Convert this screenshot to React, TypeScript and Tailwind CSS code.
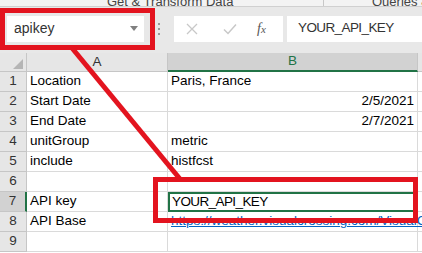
import React from "react";

const RED = "#e3141f";

type Row = { n: number; a?: string; b?: React.ReactNode; right?: boolean };

const rows: Row[] = [
  { n: 1, a: "Location", b: "Paris, France" },
  { n: 2, a: "Start Date", b: "2/5/2021", right: true },
  { n: 3, a: "End Date", b: "2/7/2021", right: true },
  { n: 4, a: "unitGroup", b: "metric" },
  { n: 5, a: "include", b: "histfcst" },
  { n: 6 },
  { n: 7, a: "API key", b: <span className="tracking-[-0.6px]">YOUR_API_KEY</span> },
  {
    n: 8,
    a: "API Base",
    b: (
      <span className="whitespace-nowrap text-[#0563c1] underline">
        https://weather.visualcrossing.com/VisualCrossingWebServices
      </span>
    ),
  },
  { n: 9 },
];

function FormulaBar() {
  return (
    <div className="flex h-[46px] items-center bg-[#e8e8e8] pb-[3px] pl-[7px]">
      <div className="flex h-[26px] w-[137px] items-center justify-between bg-white pl-[7px] pr-[6px] text-[14px] text-[#333]">
        <span>apikey</span>
        <svg width="8" height="5" viewBox="0 0 8 5">
          <path d="M0 0h8L4 5z" fill="#808080" />
        </svg>
      </div>
      <div className="ml-[14px] flex flex-col gap-[3px]">
        <span className="h-[2px] w-[2px] bg-[#9a9a9a]" />
        <span className="h-[2px] w-[2px] bg-[#9a9a9a]" />
        <span className="h-[2px] w-[2px] bg-[#9a9a9a]" />
      </div>
      <div className="ml-[14px] flex h-[26px] w-[109px] items-center bg-white">
        <svg width="12" height="12" viewBox="0 0 12 12" className="ml-[12px]">
          <path d="M1 1l10 10M11 1L1 11" stroke="#c8c8c8" strokeWidth="1.3" />
        </svg>
        <svg width="14" height="12" viewBox="0 0 14 12" className="ml-[25px]">
          <path d="M1 6.5l4 4L13 1.5" stroke="#c8c8c8" strokeWidth="1.5" fill="none" />
        </svg>
        <span className="ml-[20px] font-['Liberation_Serif',serif] text-[14px] italic text-[#555]">
          f<span className="text-[11px]">x</span>
        </span>
      </div>
      <div className="ml-[4px] flex h-[26px] flex-1 items-center bg-white pl-[11px] text-[13.5px] tracking-[-0.6px] text-[#333]">
        YOUR_API_KEY
      </div>
    </div>
  );
}

function Grid() {
  return (
    <div className="grid grid-cols-[27px_141px_250px_1fr] bg-white text-[13.5px] text-black">
      <div className="relative h-[19px] border-b border-r border-[#c6c6c6] bg-[#e6e6e6]">
        <svg width="10" height="10" viewBox="0 0 10 10" className="absolute bottom-[2px] right-[3px]">
          <path d="M10 0v10H0z" fill="#b5b5b5" />
        </svg>
      </div>
      <div className="flex h-[19px] items-center justify-center border-b border-r border-[#c6c6c6] bg-[#e6e6e6] text-[#333]">
        A
      </div>
      <div className="flex h-[19px] items-center justify-center border-b-2 border-r border-b-[#217346] border-r-[#c6c6c6] bg-[#d2d2d2] text-[#217346]">
        B
      </div>
      <div className="h-[19px] border-b border-[#c6c6c6] bg-[#e6e6e6]" />
      {rows.map((r) => {
        const active = r.n === 7;
        return (
          <React.Fragment key={r.n}>
            <div
              className={
                active
                  ? "flex h-[20px] items-center justify-center border-b border-r-2 border-b-[#c6c6c6] border-r-[#217346] bg-[#d2d2d2] text-[#333]"
                  : "flex h-[20px] items-center justify-center border-b border-r border-[#c6c6c6] bg-[#e6e6e6] text-[#333]"
              }
            >
              {r.n}
            </div>
            <div className="flex h-[20px] items-center border-b border-r border-[#dadada] pl-[3px]">
              {r.a}
            </div>
            <div
              className={
                active
                  ? "flex h-[20px] items-center border-2 border-[#217346] pl-[2px]"
                  : r.right
                  ? "flex h-[20px] items-center justify-end border-b border-r border-[#dadada] pr-[3px]"
                  : "flex h-[20px] items-center border-b border-r border-[#dadada] pl-[3px]"
              }
            >
              {r.b}
            </div>
            <div className="h-[20px] border-b border-[#dadada]" />
          </React.Fragment>
        );
      })}
    </div>
  );
}

export default function App() {
  return (
    <div className="relative h-[253px] w-[422px] overflow-hidden bg-white font-['Liberation_Sans',Arial,sans-serif]">
      <div className="flex h-[7px] overflow-hidden whitespace-nowrap border-b border-[#d0d0d0] bg-[#f3f3f3] text-[13px] leading-none text-[#444]">
        <span className="ml-[107px] mt-[-5px] w-[111px] shrink-0">Get &amp; Transform Data</span>
        <span className="ml-[105px] h-full w-px shrink-0 bg-[#c8c8c8]" />
        <span className="ml-[48px] mt-[-5px] shrink-0">Queries &amp; Connections</span>
      </div>
      <FormulaBar />
      <Grid />

      <svg className="pointer-events-none absolute inset-0" width="422" height="253" viewBox="0 0 422 253">
        <rect x="2.5" y="10.5" width="150" height="37" fill="none" stroke={RED} strokeWidth="5" />
        <line x1="72" y1="48" x2="180" y2="179" stroke={RED} strokeWidth="5" />
        <rect x="155.5" y="179.5" width="260" height="41" fill="none" stroke={RED} strokeWidth="5" />
      </svg>
    </div>
  );
}
